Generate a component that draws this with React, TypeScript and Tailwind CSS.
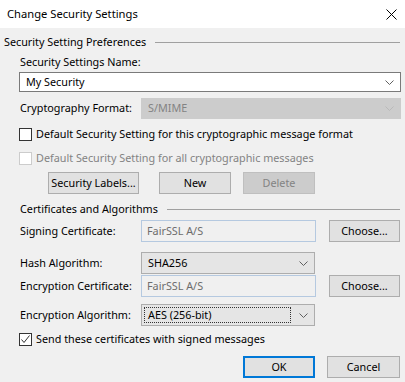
import React from 'react';

const Chevron: React.FC<{ muted?: boolean }> = ({ muted }) => (
  <svg width="9" height="5" viewBox="0 0 9 5" className="shrink-0">
    <path d="M0.5 0.5 L4.5 4.5 L8.5 0.5" fill="none" stroke={muted ? '#b9b9b9' : '#606060'} strokeWidth="1" />
  </svg>
);

const GroupHeader: React.FC<{ title: string; indent?: boolean }> = ({ title, indent }) => (
  <div className={`flex items-center h-[16px] ${indent ? 'pl-[20px]' : 'pl-[4px]'} pr-[5px]`}>
    <span className="whitespace-nowrap">{title}</span>
    <div className="flex-1 ml-[9px] h-px bg-[#a0a0a0]" />
  </div>
);

const Checkbox: React.FC<{ checked?: boolean; disabled?: boolean; label: string }> = ({ checked, disabled, label }) => (
  <div className="flex items-center h-[16px] pl-[19px]">
    <div
      className={`w-[13px] h-[13px] shrink-0 border bg-white flex items-center justify-center ${
        disabled ? 'border-[#cccccc]' : 'border-[#333333]'
      }`}
    >
      {checked && (
        <svg width="11" height="11" viewBox="0 0 11 11">
          <path d="M1.5 5.5 L4 8.5 L9.5 1.5" fill="none" stroke="#333333" strokeWidth="1" />
        </svg>
      )}
    </div>
    <span className={`ml-[4px] whitespace-nowrap ${disabled ? 'text-[#838383]' : ''}`}>{label}</span>
  </div>
);

const Button: React.FC<{ label: string; w: string; disabled?: boolean; primary?: boolean }> = ({ label, w, disabled, primary }) => (
  <div
    className={`${w} h-[22px] flex items-center justify-center whitespace-nowrap ${
      disabled
        ? 'bg-[#cccccc] border border-[#bfbfbf] text-[#838383]'
        : primary
        ? 'bg-[#e1e1e1] border-2 border-[#0078d7]'
        : 'bg-[#e1e1e1] border border-[#adadad]'
    }`}
  >
    {label}
  </div>
);

const Label: React.FC<{ text: string }> = ({ text }) => (
  <span className="pl-[20px] w-[141px] shrink-0 whitespace-nowrap">{text}</span>
);

export default function App() {
  return (
    <div
      className="w-[405px] h-[382px] bg-[#f0f0f0] text-black text-[10.8px] leading-none overflow-hidden"
      style={{ fontFamily: '"Noto Sans", "Open Sans", sans-serif' }}
    >
      {/* title bar */}
      <div className="h-[28px] bg-white flex items-center justify-between pl-[7px] pr-[8px]">
        <span className="text-[11.2px]">Change Security Settings</span>
        <svg width="11" height="11" viewBox="0 0 11 11">
          <path d="M0.5 0.5 L10.5 10.5 M10.5 0.5 L0.5 10.5" stroke="#000" strokeWidth="1" />
        </svg>
      </div>

      <div className="flex flex-col">
        <div className="mt-[6px]">
          <GroupHeader title="Security Setting Preferences" />
        </div>

        <div className="mt-[4px] h-[16px] flex items-center pl-[20px]">Security Settings Name:</div>

        <div className="mt-[2px] ml-[19px] w-[382px] h-[20px] bg-white border border-[#7a7a7a] flex items-center justify-between pl-[6px] pr-[6px]">
          <span>My Security</span>
          <Chevron />
        </div>

        <div className="mt-[6px] h-[21px] flex items-center">
          <Label text="Cryptography Format:" />
          <div className="w-[260px] h-[21px] bg-[#cccccc] border border-[#cccccc] flex items-center justify-between pl-[6px] pr-[6px] text-[#838383]">
            <span>S/MIME</span>
            <Chevron muted />
          </div>
        </div>

        <div className="mt-[7px]">
          <Checkbox label="Default Security Setting for this cryptographic message format" />
        </div>
        <div className="mt-[8px]">
          <Checkbox disabled label="Default Security Setting for all cryptographic messages" />
        </div>

        <div className="mt-[6px] flex pl-[48px]">
          <Button label="Security Labels..." w="w-[91px]" />
          <div className="ml-[20px]">
            <Button label="New" w="w-[72px]" />
          </div>
          <div className="ml-[12px]">
            <Button label="Delete" w="w-[72px]" disabled />
          </div>
        </div>

        <div className="mt-[7px]">
          <GroupHeader title="Certificates and Algorithms" indent />
        </div>

        <div className="mt-[3px] h-[22px] flex items-center">
          <Label text="Signing Certificate:" />
          <div className="w-[175px] h-[22px] bg-[#f0f0f0] border border-[#b5c9e0] flex items-center pl-[5px] text-[#6d6d6d]">
            FairSSL A/S
          </div>
          <div className="ml-[13px]">
            <Button label="Choose..." w="w-[71px]" />
          </div>
        </div>

        <div className="mt-[10px] h-[22px] flex items-center">
          <Label text="Hash Algorithm:" />
          <div className="w-[174px] h-[22px] bg-[#e5e5e5] border border-[#adadad] flex items-center justify-between pl-[6px] pr-[6px]">
            <span>SHA256</span>
            <Chevron />
          </div>
        </div>

        <div className="mt-[1px] h-[22px] flex items-center">
          <Label text="Encryption Certificate:" />
          <div className="w-[175px] h-[22px] bg-[#f0f0f0] border border-[#b5c9e0] flex items-center pl-[5px] text-[#6d6d6d]">
            FairSSL A/S
          </div>
          <div className="ml-[13px]">
            <Button label="Choose..." w="w-[71px]" />
          </div>
        </div>

        <div className="mt-[7px] h-[22px] flex items-center">
          <Label text="Encryption Algorithm:" />
          <div className="w-[174px] h-[22px] bg-[#e5e5e5] border border-[#adadad] flex items-center pl-[2px] pr-[6px]">
            <div className="flex-1 h-[16px] border border-dotted border-[#333333] flex items-center pl-[3px]">
              AES (256-bit)
            </div>
            <div className="ml-[8px]">
              <Chevron />
            </div>
          </div>
        </div>

        <div className="mt-[5px]">
          <Checkbox checked label="Send these certificates with signed messages" />
        </div>

        <div className="mt-[9px] flex pl-[243px]">
          <Button label="OK" w="w-[72px]" primary />
          <div className="ml-[12px]">
            <Button label="Cancel" w="w-[73px]" />
          </div>
        </div>
      </div>
    </div>
  );
}
